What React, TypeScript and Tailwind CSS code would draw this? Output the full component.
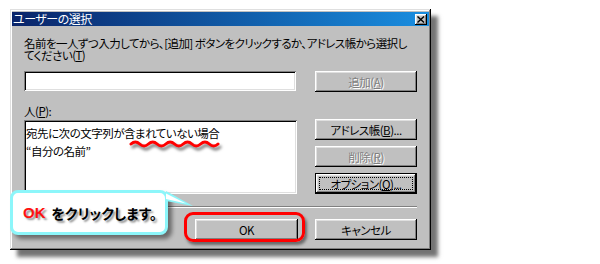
import React from "react";

const raised =
  "shadow-[inset_-1px_-1px_#000,inset_1px_1px_#fff,inset_-2px_-2px_#808080,inset_2px_2px_#dfdfdf]";
const sunken =
  "shadow-[inset_1px_1px_#808080,inset_-1px_-1px_#fff,inset_2px_2px_#000,inset_-2px_-2px_#dfdfdf]";

function Btn({
  children,
  w = "w-[102px]",
  disabled = false,
  className = "",
}: {
  children: React.ReactNode;
  w?: string;
  disabled?: boolean;
  className?: string;
}) {
  return (
    <div
      className={`${w} h-[21px] shrink-0 bg-[#c0c0c0] flex items-center justify-center ${raised} ${
        disabled ? "text-[#808080] [text-shadow:1px_1px_0_#fff]" : "text-black"
      } ${className}`}
    >
      <span>{children}</span>
    </div>
  );
}

export default function App() {
  return (
    <div className="relative w-[600px] h-[264px] bg-white overflow-hidden font-['Noto_Sans_CJK_JP',sans-serif] text-[11.5px] leading-[12px] tracking-[-0.5px] text-black [font-feature-settings:'palt']">
      {/* Dialog */}
      <div className="ml-[10px] mt-[9px] w-[421px] h-[241px] bg-[#c0c0c0] p-[2px] pt-[3px] flex flex-col shadow-[inset_-1px_-1px_#000,inset_1px_1px_#dfdfdf,inset_-2px_-2px_#808080,inset_2px_2px_#fff,7px_7px_4px_rgba(0,0,0,0.55)]">
        {/* Title bar */}
        <div className="h-[14px] flex items-center bg-gradient-to-r from-[#0a246a] to-[#1a8ee0] pl-[1px] pr-[2px]">
          <span className="text-white text-[12px] leading-[12px]">ユーザーの選択</span>
          <div
            className={`ml-auto w-[12px] h-[11px] bg-[#c0c0c0] flex items-center justify-center ${raised}`}
          >
            <svg width="8" height="7" viewBox="0 0 8 7">
              <path d="M0.5 0.5 L7 6.5 M7 0.5 L0.5 6.5" stroke="#000" strokeWidth="1.4" />
            </svg>
          </div>
        </div>

        {/* Content */}
        <div className="flex flex-col px-[12px]">
          <p className="mt-[11px] leading-[12px] whitespace-nowrap tracking-[-0.55px]">
            名前を一人ずつ入力してから、[追加] ボタンをクリックするか、アドレス帳から選択し
            <br />
            てください(<u>T</u>)
          </p>

          <div className="mt-[10px] flex items-start">
            <div className={`w-[272px] h-[20px] bg-white ${sunken}`} />
            <Btn className="ml-[19px]" disabled>
              追加(<u>A</u>)
            </Btn>
          </div>

          <div className="mt-[13px] leading-[12px]">
            人(<u>P</u>):
          </div>

          <div className="mt-[2px] flex items-start">
            <div
              className={`mt-[1px] w-[273px] h-[74px] bg-white pl-[2px] pt-[4px] leading-[18px] whitespace-nowrap ${sunken}`}
            >
              <div>宛先に次の文字列が含まれていない場合</div>
              <div>“自分の名前”</div>
            </div>
            <div className="ml-[18px] flex flex-col gap-[6px]">
              <Btn>
                アドレス帳(<u>B</u>)...
              </Btn>
              <Btn disabled>
                削除(<u>R</u>)
              </Btn>
              <div className="w-[102px] h-[21px] bg-[#c0c0c0] border border-black flex p-[3px] shadow-[inset_-1px_-1px_#000,inset_1px_1px_#fff,inset_-2px_-2px_#808080,inset_2px_2px_#dfdfdf]">
                <div className="flex-1 border border-dotted border-black flex items-center justify-center">
                  <span>
                    オプション(<u>O</u>)...
                  </span>
                </div>
              </div>
            </div>
          </div>

          <div className="mt-[12px] border-t border-t-[#808080] border-b border-b-white" />

          <div className="mt-[11px] flex justify-end gap-[17px]">
            <Btn w="w-[103px]">OK</Btn>
            <Btn>キャンセル</Btn>
          </div>
        </div>
      </div>

      {/* Red wavy underline */}
      <svg
        className="absolute left-[129px] top-[138px] drop-shadow-[2px_3px_1.5px_rgba(0,0,0,0.55)]"
        width="92"
        height="14"
        viewBox="0 0 92 14"
      >
        <path
          d="M2 6 q4.35 -4 8.7 0 t8.7 0 t8.7 0 t8.7 0 t8.7 0 t8.7 0 t8.7 0 t8.7 0 t8.7 0 t8.7 0"
          fill="none"
          stroke="#ff0000"
          strokeWidth="3"
          strokeLinecap="round"
        />
      </svg>

      {/* Red ring around OK */}
      <div className="absolute left-[184px] top-[212px] w-[121px] h-[30px] border-[3px] border-[#ff0000] rounded-[9px] shadow-[2px_3px_3px_rgba(0,0,0,0.45)]" />

      {/* Callout */}
      <div className="absolute left-[10px] top-[190px] w-[158px] h-[45px] bg-white border-[3px] border-[#8cf6fa] rounded-[8px] shadow-[4px_4px_4px_rgba(0,0,0,0.45)] flex items-center pl-[10px] tracking-normal [text-shadow:2px_2px_2px_rgba(0,0,0,0.45)]">
        <span className="text-[#ff1010] font-bold font-['Liberation_Sans',sans-serif] text-[15px] leading-[15px]">
          OK
        </span>
        <span className="ml-[6px] font-bold text-[14px] leading-[14px]">をクリックします。</span>
      </div>
      <svg className="absolute left-[164px] top-[188px]" width="32" height="20" viewBox="0 0 32 20">
        <polygon points="2,3 29,18 2,13" fill="#8cf6fa" />
        <polygon points="2,5.5 22,15.5 2,11" fill="#ffffff" />
      </svg>
    </div>
  );
}
